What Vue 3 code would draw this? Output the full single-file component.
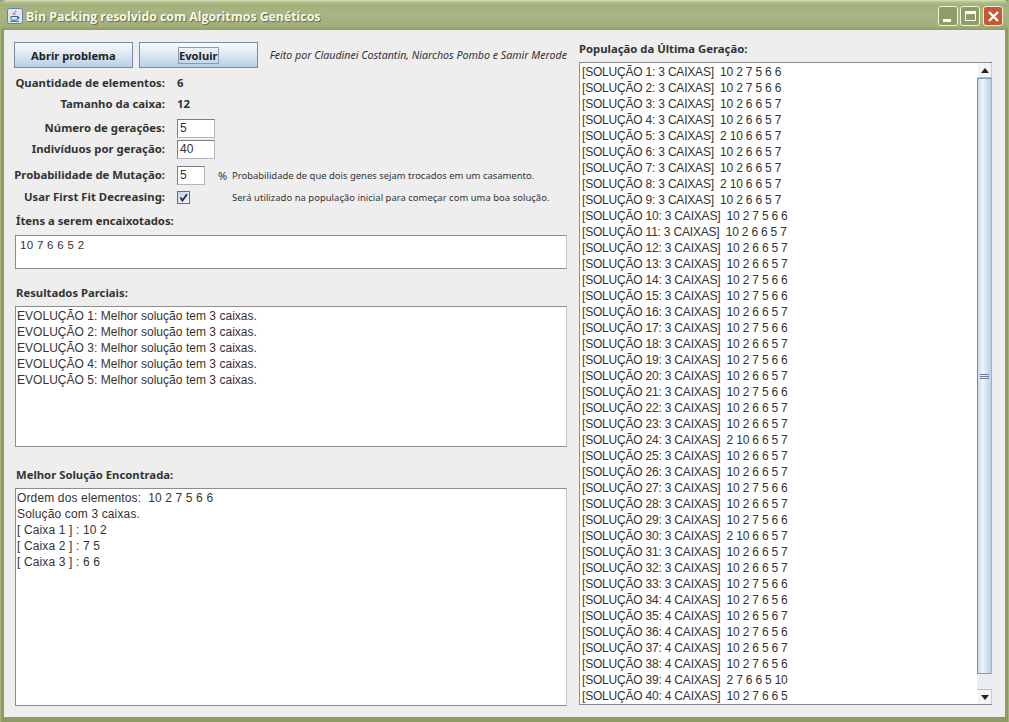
<script setup>
const geral = [
  ['1','3','10 2 7 5 6 6'],['2','3','10 2 7 5 6 6'],['3','3','10 2 6 6 5 7'],['4','3','10 2 6 6 5 7'],
  ['5','3','2 10 6 6 5 7'],['6','3','10 2 6 6 5 7'],['7','3','10 2 6 6 5 7'],['8','3','2 10 6 6 5 7'],
  ['9','3','10 2 6 6 5 7'],['10','3','10 2 7 5 6 6'],['11','3','10 2 6 6 5 7'],['12','3','10 2 6 6 5 7'],
  ['13','3','10 2 6 6 5 7'],['14','3','10 2 7 5 6 6'],['15','3','10 2 7 5 6 6'],['16','3','10 2 6 6 5 7'],
  ['17','3','10 2 7 5 6 6'],['18','3','10 2 6 6 5 7'],['19','3','10 2 7 5 6 6'],['20','3','10 2 6 6 5 7'],
  ['21','3','10 2 7 5 6 6'],['22','3','10 2 6 6 5 7'],['23','3','10 2 6 6 5 7'],['24','3','2 10 6 6 5 7'],
  ['25','3','10 2 6 6 5 7'],['26','3','10 2 6 6 5 7'],['27','3','10 2 7 5 6 6'],['28','3','10 2 6 6 5 7'],
  ['29','3','10 2 7 5 6 6'],['30','3','2 10 6 6 5 7'],['31','3','10 2 6 6 5 7'],['32','3','10 2 6 6 5 7'],
  ['33','3','10 2 7 5 6 6'],['34','4','10 2 7 6 5 6'],['35','4','10 2 6 5 6 7'],['36','4','10 2 7 6 5 6'],
  ['37','4','10 2 6 5 6 7'],['38','4','10 2 7 6 5 6'],['39','4','2 7 6 6 5 10'],['40','4','10 2 7 6 6 5']
]
const linhas = geral.map(([n, c, s]) => `[SOLUÇÃO ${n}: ${c} CAIXAS]  ${s}`)
const parciais = [1,2,3,4,5].map(n => `EVOLUÇÃO ${n}: Melhor solução tem 3 caixas.`)
const melhor = ['Ordem dos elementos:  10 2 7 5 6 6','Solução com 3 caixas.','[ Caixa 1 ] : 10 2','[ Caixa 2 ] : 7 5','[ Caixa 3 ] : 6 6']
</script>

<template>
  <div class="window">
    <header class="titlebar">
      <svg class="appicon" width="16" height="16" viewBox="0 0 16 16">
        <rect x="0.5" y="0.5" width="15" height="15" rx="2" fill="#dfe6f2" stroke="#6a7fa8"/>
        <path d="M8.5 2.5c1.5 1.6-1.8 2.6-.6 4.4M6.6 4.4c-1 1 .4 1.6.3 2.6" fill="none" stroke="#d8552a" stroke-width="1"/>
        <path d="M4 8.5h6.5v2.2c0 1-1 1.6-2 1.6H6c-1 0-2-.6-2-1.6zM10.5 9h1.4v1.4h-1.4M3 13.3h9" fill="none" stroke="#3c5f9c" stroke-width="1"/>
      </svg>
      <span class="title">Bin Packing resolvido com Algoritmos Genéticos</span>
      <div class="winbtns">
        <span class="wb"><i class="min"></i></span>
        <span class="wb"><i class="max"></i></span>
        <span class="wb close">
          <svg width="13" height="13" viewBox="0 0 13 13"><path d="M2 2l9 9M11 2l-9 9" stroke="#fff" stroke-width="2.4"/></svg>
        </span>
      </div>
    </header>
    <main class="content">
      <section class="left">
        <div class="toolbar">
          <button class="btn">Abrir problema</button>
          <button class="btn"><span class="focus">Evoluir</span></button>
          <span class="credit">Feito por Claudinei Costantin, Niarchos Pombo e Samir Merode</span>
        </div>
        <div class="row r1"><label>Quantidade de elementos:</label><b>6</b></div>
        <div class="row r2"><label>Tamanho da caixa:</label><b>12</b></div>
        <div class="row r3"><label>Número de gerações:</label><span class="input wide">5</span></div>
        <div class="row r4"><label>Indivíduos por geração:</label><span class="input wide">40</span></div>
        <div class="row r5">
          <label>Probabilidade de Mutação:</label><span class="input narrow">5</span>
          <span class="pct">%</span><span class="hint">Probabilidade de que dois genes sejam trocados em um casamento.</span>
        </div>
        <div class="row r6">
          <label>Usar First Fit Decreasing:</label>
          <span class="check"><svg width="9" height="9" viewBox="0 0 9 9"><path d="M1.5 4.5l2 3L8 1.2" fill="none" stroke="#1c2c52" stroke-width="1.8"/></svg></span>
          <span class="hint second">Será utilizado na população inicial para começar com uma boa solução.</span>
        </div>
        <h2 class="heading h1">Ítens a serem encaixotados:</h2>
        <div class="area items">10 7 6 6 5 2</div>
        <h2 class="heading h2">Resultados Parciais:</h2>
        <div class="area partial"><div v-for="p in parciais" :key="p">{{ p }}</div></div>
        <h2 class="heading h3">Melhor Solução Encontrada:</h2>
        <div class="area best"><div v-for="m in melhor" :key="m">{{ m }}</div></div>
      </section>
      <section class="right">
        <h2 class="heading pop">População da Última Geração:</h2>
        <div class="listbox">
          <div class="area list"><div v-for="l in linhas" :key="l">{{ l }}</div></div>
          <div class="scrollbar">
            <span class="arrow first"><i class="up"></i></span>
            <div class="track">
              <div class="thumb"><i></i><i></i><i></i></div>
            </div>
            <span class="arrow last"><i class="down"></i></span>
          </div>
        </div>
      </section>
    </main>
  </div>
</template>

<style>
html, body { margin: 0; padding: 0; background: #fff; }
</style>

<style scoped>
.window {
  width: 1009px; height: 722px; box-sizing: border-box; overflow: hidden;
  display: flex; flex-direction: column;
  background: #8d9c62; padding: 0 3px 5px 3px;
  border-left: 1px solid #a5b37d; border-right: 1px solid #a5b37d;
}
.titlebar {
  box-sizing: border-box; height: 30px; margin: 0 -4px; padding: 2px 6px 0 7px; flex: none;
  display: flex; align-items: center; gap: 3px;
  background: linear-gradient(180deg, #d9e2b8 0, #b4c190 2px, #a3b07c 5px, #a9b684 14px, #a1af7a 26px, #8f9d66 30px);
  border-radius: 6px 6px 0 0;
}
.appicon { flex: none; }
.title {
  font: bold 12.3px "Open Sans", "Liberation Sans", sans-serif; color: #f6f8ee;
  white-space: nowrap; padding-top: 1px;
  text-shadow: 1px 1px 1px #5f6c3e;
}
.winbtns { margin-left: auto; display: flex; gap: 2px; }
.wb {
  box-sizing: border-box; width: 20px; height: 20px; border: 1px solid #eef2e0; border-radius: 3px;
  background: #8f9c68; display: flex; align-items: center; justify-content: center;
}
.wb.close { background: #c8562f; margin-left: 1px; }
.wb i { display: block; box-sizing: border-box; }
.min { width: 8px; height: 3px; background: #fff; margin-top: 8px; margin-right: 3px; }
.max { width: 11px; height: 10px; border: 1px solid #fff; border-top-width: 3px; }
.content {
  flex: 1; display: flex; background: #eeeeee; min-height: 0;
  padding-left: 10px; font-family: "Noto Sans", "DejaVu Sans", sans-serif;
}
.left { width: 553px; flex: none; }
.right { margin-left: 12px; width: 412px; flex: none; }
.toolbar { display: flex; align-items: center; margin-top: 12px; height: 26px; }
.btn {
  width: 119px; height: 26px; box-sizing: border-box; padding: 0;
  border: 1px solid #7a8aa9; border-radius: 0;
  background: linear-gradient(180deg, #fbfcfe 0%, #dfe8f3 45%, #b8cfe5 100%);
  font: bold 11.2px "Noto Sans", sans-serif; color: #222;
  display: flex; align-items: center; justify-content: center;
}
.btn + .btn { margin-left: 6px; }
.focus { border: 1px solid #8a9bb8; line-height: 15px; }
.credit { font: italic 10.65px "Noto Sans", sans-serif; color: #333; margin-left: 12px; white-space: nowrap; }
.row { display: flex; align-items: center; color: #333; font-size: 11.35px; }
.row label { width: 151px; text-align: right; font-weight: 700; white-space: nowrap; margin-right: 12px; padding-bottom: 2px; }
.row b { font-weight: 700; padding-bottom: 2px; }
.r1 { height: 20px; margin-top: 5px; }
.r2 { height: 20px; margin-top: 1px; }
.r3 { height: 19px; margin-top: 5px; }
.r4 { height: 19px; margin-top: 2px; }
.r5 { height: 19px; margin-top: 7px; }
.r6 { height: 14px; margin-top: 5px; }
.input {
  box-sizing: border-box; height: 19px; background: #fff; border: 1px solid #7e7e7e;
  border-right-color: #b5b5b5; border-bottom-color: #b5b5b5;
  font: 12px "Liberation Sans", sans-serif; color: #333; line-height: 17px; padding-left: 2px;
}
.wide { width: 38px; }
.narrow { width: 28px; }
.pct { font: 11px "Noto Sans", sans-serif; margin-left: 13px; width: 14px; }
.hint { font: 9.45px "Noto Sans", sans-serif; color: #333; white-space: nowrap; }
.second { margin-left: 42px; letter-spacing: 0.03px; }
.check {
  box-sizing: border-box; width: 13px; height: 13px; border: 1px solid #5c6f96;
  background: linear-gradient(135deg, #c8d2e4, #f2f4fa);
  display: flex; align-items: center; justify-content: center;
}
.heading { margin: 0; font: bold 11.3px/16px "Noto Sans", sans-serif; color: #333; }
.h1 { margin-top: 9px; padding-left: 2px; }
.h2 { margin-top: 16px; padding-left: 2px; }
.h3 { margin-top: 20px; padding-left: 2px; }
.pop { margin-top: 11px; }
.area {
  box-sizing: border-box; background: #fff; border: 1px solid #8c8c8c;
  border-right-color: #c4c4c4; border-bottom-color: #8c8c8c;
  font: 12px/16px "Liberation Sans", sans-serif; color: #333; white-space: pre;
  padding-left: 1px; margin-left: 1px; overflow: hidden;
}
.items { height: 34px; margin-top: 6px; padding: 1px 0 0 4px; width: 552px; font-size: 11.5px; letter-spacing: 0.3px; }
.partial { height: 141px; margin-top: 5px; width: 552px; padding-top: 1px; letter-spacing: 0.03px; }
.best { height: 218px; margin-top: 5px; width: 552px; padding-top: 1px; letter-spacing: 0.14px; }
.listbox { display: flex; height: 643px; margin-top: 5px; }
.list { width: 398px; margin-left: 0; height: 643px; padding: 1px 0 0 2px; border-right: none; flex: none; letter-spacing: -0.2px; }
.scrollbar {
  width: 15px; display: flex; flex-direction: column; background: #ebedf0;
  border-top: 1px solid #8c8c8c; border-bottom: 1px solid #8c8c8c; box-sizing: border-box; flex: none;
}
.arrow { height: 15px; flex: none; background: #f3f4f6; display: flex; align-items: center; justify-content: center; box-sizing: border-box; border-left: 1px solid #fff; border-right: 1px solid #c8ccd2; }
.arrow.first { border-bottom: 1px solid #b6bcc6; }
.arrow.last { border-top: 1px solid #b6bcc6; }
.arrow i { width: 0; height: 0; border-left: 4px solid transparent; border-right: 4px solid transparent; }
.up { border-bottom: 5px solid #222; }
.down { border-top: 5px solid #222; }
.track { flex: 1; display: flex; flex-direction: column; padding-bottom: 15px; }
.thumb {
  flex: 1; box-sizing: border-box; border: 1px solid #7f9dc4; border-left-color: #6c8bb5; border-right-color: #9fb3cc;
  background: linear-gradient(90deg, #c9d9ee 0%, #eef4fb 35%, #d3e0f0 70%, #bccde2 100%);
  display: flex; flex-direction: column; align-items: center; justify-content: center; gap: 1px;
}
.thumb i { width: 9px; height: 1px; background: #6e7f99; }
</style>
